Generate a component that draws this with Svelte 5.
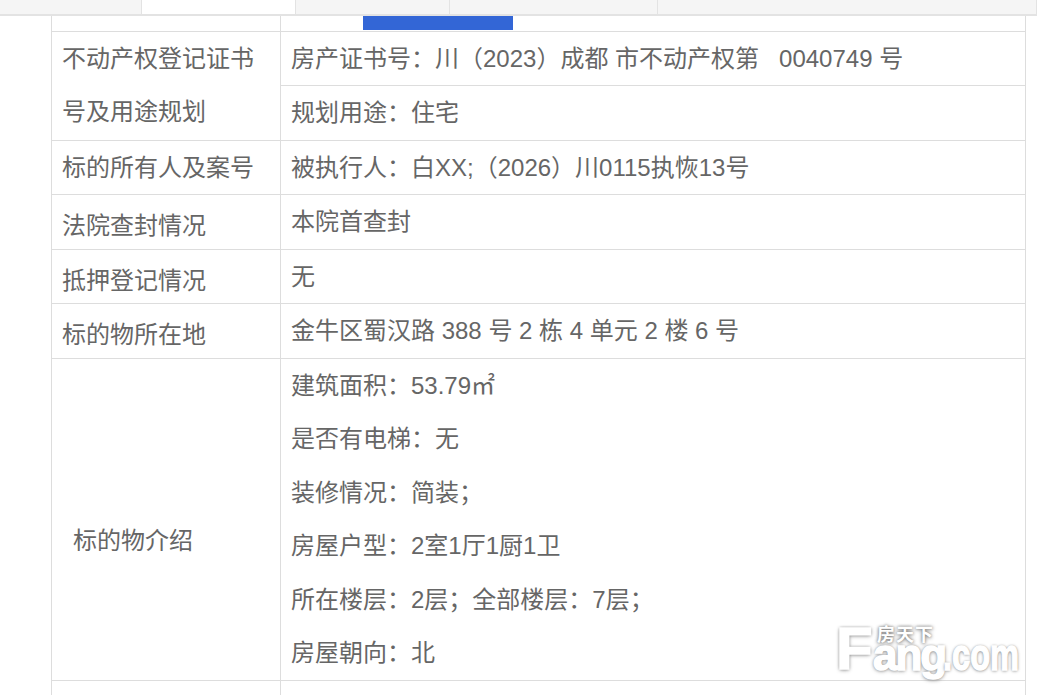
<script>
  const tabs = [
    { width: 142 },
    { width: 154, active: true },
    { width: 154 },
    { width: 208 },
    { width: 379 }
  ];

  const rows = [
    { label: '标的所有人及案号', value: '被执行人：白XX;（2026）川0115执恢13号', top: true },
    { label: '法院查封情况', value: '本院首查封' },
    { label: '抵押登记情况', value: '无' },
    { label: '标的物所在地', value: '金牛区蜀汉路 388 号 2 栋 4 单元 2 楼 6 号' }
  ];

  const intro = [
    '建筑面积：53.79㎡',
    '是否有电梯：无',
    '装修情况：简装；',
    '房屋户型：2室1厅1厨1卫',
    '所在楼层：2层；全部楼层：7层；',
    '房屋朝向：北'
  ];
</script>

<div class="page">
  <div class="tabs">
    {#each tabs as tab}
      <div class="tab" class:active={tab.active} style="width: {tab.width}px"></div>
    {/each}
  </div>

  <table>
    <colgroup>
      <col class="col-label" />
      <col />
    </colgroup>
    <tbody>
      <tr class="cut">
        <td></td>
        <td><div class="bar"></div></td>
      </tr>
      <tr>
        <td class="label" rowspan="2">不动产权登记证书<br />号及用途规划</td>
        <td>房产证书号：川（2023）成都 市不动产权第&nbsp;&nbsp; 0040749 号</td>
      </tr>
      <tr>
        <td>规划用途：住宅</td>
      </tr>
      {#each rows as row}
        <tr>
          <td class="label" class:low={!row.top}>{row.label}</td>
          <td>{row.value}</td>
        </tr>
      {/each}
      <tr>
        <td class="label center">标的物介绍</td>
        <td class="intro">
          {#each intro as line}
            <p>{line}</p>
          {/each}
        </td>
      </tr>
      <tr class="rest">
        <td></td>
        <td></td>
      </tr>
    </tbody>
  </table>

  <!-- watermark -->
  <div class="mark">
    <span class="mark-f">F</span>
    <span class="mark-cn">房天下</span>
    <span class="mark-ang">ang</span>
    <span class="mark-com">.com</span>
  </div>
</div>

<style>
  :global(body) {
    background: #fff;
    overflow: hidden;
  }

  .page {
    position: relative;
    height: 695px;
    overflow: hidden;
    font-family: "Liberation Sans", "Noto Sans CJK SC", sans-serif;
    font-size: 24px;
    color: #666;
  }

  .tabs {
    display: flex;
    height: 14px;
    background: #f5f5f5;
    border-bottom: 2px solid #e3e3e3;
  }

  .tab {
    box-sizing: border-box;
    flex: none;
    height: 15px;
    border-right: 1px solid #e3e3e3;
  }

  .tab.active {
    background: #fff;
    height: 14px;
  }

  table {
    table-layout: fixed;
    width: 975px;
    margin-left: 51px;
    border-collapse: collapse;
  }

  .col-label {
    width: 229px;
  }

  td {
    padding: 0 10px;
    border: 1px solid #ddd;
    line-height: 53.45px;
    vertical-align: top;
  }

  .cut td {
    height: 15px;
    padding: 0;
    border-top: 0;
    line-height: 1;
  }

  .rest td {
    height: 40px;
  }

  .bar {
    width: 150px;
    height: 14px;
    margin-left: 82px;
    background: #3366d6;
  }

  .low {
    padding-top: 9px;
    line-height: 44.45px;
  }

  .center {
    padding-top: 42px;
    padding-left: 21px;
    vertical-align: middle;
  }

  .intro {
    padding-bottom: 0.6px;
  }

  p {
    margin: 0;
  }

  .mark {
    position: absolute;
    left: 836px;
    top: 620px;
    width: 190px;
    height: 64px;
    color: #fff;
    font-weight: bold;
    white-space: nowrap;
    -webkit-text-stroke: 1.5px #fff;
    text-shadow: 0 0 3px #777, 0 1px 4px #999;
  }

  .mark span {
    position: absolute;
  }

  .mark-f {
    left: 0;
    top: -1px;
    font-size: 60px;
    line-height: 60px;
  }

  .mark-cn {
    left: 41px;
    top: 8px;
    font-size: 18px;
    line-height: 15px;
    letter-spacing: 1px;
    -webkit-text-stroke: 0;
  }

  .mark-ang {
    left: 37px;
    top: 23px;
    font-size: 44px;
    line-height: 24px;
    letter-spacing: -2px;
  }

  .mark-com {
    left: 107px;
    top: 23px;
    font-size: 44px;
    line-height: 24px;
    transform: scaleX(0.74);
    transform-origin: left;
  }
</style>
